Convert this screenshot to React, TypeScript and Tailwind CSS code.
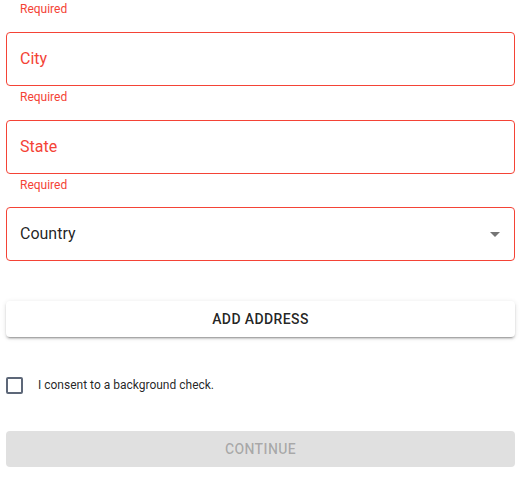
import { useState } from 'react';

const font = { fontFamily: 'Roboto, "Liberation Sans", sans-serif' };

type FieldProps = {
  label: string;
  error?: boolean;
  select?: boolean;
};

const Field = ({ label, error, select }: FieldProps) => (
  <div className="flex flex-col">
    <div className="relative flex h-[54px] items-center rounded-[4px] border border-[#f44336] px-[13px]">
      <span
        className={
          'text-[16px] leading-none ' +
          (error ? 'text-[#f44336]' : 'text-[rgba(0,0,0,0.87)]')
        }
      >
        {label}
      </span>
      {select && (
        <svg
          className="absolute right-[14px] top-[24px]"
          width="10"
          height="5"
          viewBox="0 0 10 5"
        >
          <path d="M0 0h10L5 5z" fill="#757575" />
        </svg>
      )}
    </div>
    {error && <HelperText />}
  </div>
);

const HelperText = () => (
  <p className="ml-[14px] h-[34px] pt-[1px] text-[12px] leading-[20px] text-[#f44336]">
    Required
  </p>
);

const App = () => {
  const [consent, setConsent] = useState(false);

  return (
    <div className="min-h-screen bg-white pl-[6px] pr-[7px] pb-4" style={font}>
      <div className="-mt-[2px]">
        <HelperText />
      </div>
      <Field label="City" error />
      <Field label="State" error />
      <div className="-mt-[1px]">
        <Field label="Country" select />
      </div>

      <button className="mt-[40px] flex h-[36px] w-full items-center justify-center rounded-[4px] bg-white text-[14px] font-medium uppercase tracking-[0.4px] text-[rgba(0,0,0,0.87)] shadow-[0_3px_1px_-2px_rgba(0,0,0,0.2),0_2px_2px_0_rgba(0,0,0,0.14),0_1px_5px_0_rgba(0,0,0,0.12)]">
        Add Address
      </button>

      <label className="mt-[39px] flex cursor-pointer items-center">
        <span
          onClick={() => setConsent(!consent)}
          className="flex h-[17px] w-[17px] items-center justify-center rounded-[2px] border-2 border-[#5d6778]"
        >
          {consent && <span className="h-[9px] w-[9px] bg-[#5d6778]" />}
        </span>
        <span className="ml-[15px] text-[12px] text-[rgba(0,0,0,0.87)]">
          I consent to a background check.
        </span>
      </label>

      <button
        disabled
        className="mt-[37px] flex h-[36px] w-full items-center justify-center rounded-[4px] bg-[#e0e0e0] text-[14px] font-medium uppercase tracking-[0.4px] text-[rgba(0,0,0,0.26)]"
      >
        Continue
      </button>
    </div>
  );
};

export default App;
